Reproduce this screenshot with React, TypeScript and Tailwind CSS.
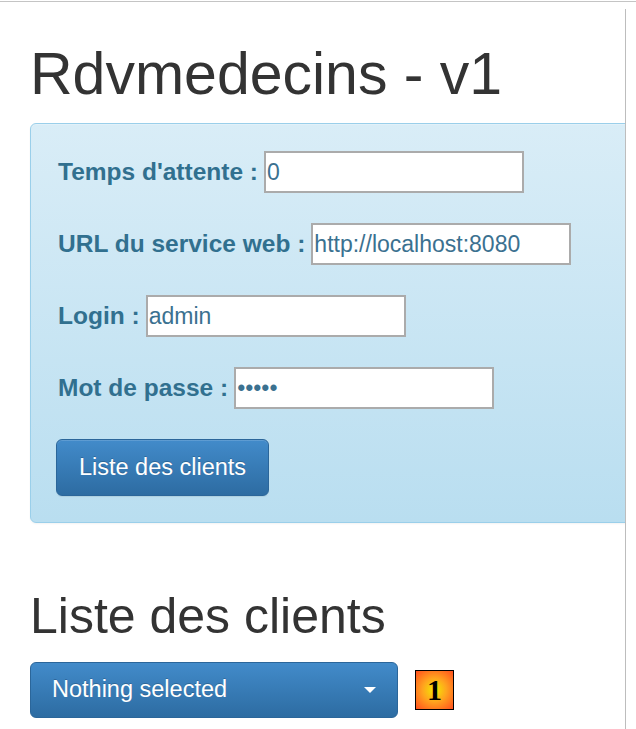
import React from 'react';

const fields = [
  { label: "Temps d'attente :", value: '0' },
  { label: 'URL du service web :', value: 'http://localhost:8080' },
  { label: 'Login :', value: 'admin' },
  { label: 'Mot de passe :', value: '•••••' },
];

const Field = ({ label, value }: { label: string; value: string }) => (
  <div className="flex items-center gap-[6px] h-[42px]">
    <label className="ml-[2px] text-[24.5px] font-bold text-[#31708f] leading-none">{label}</label>
    <input
      readOnly
      value={value}
      className="w-[260px] h-[42px] border-2 border-[#ababab] bg-white px-[1px] text-[23px] text-[#3b7190] outline-none"
    />
  </div>
);

const App = () => {
  return (
    <div className="w-[636px] h-[729px] bg-white overflow-hidden font-['Liberation_Sans',Arial,sans-serif]">
      <div className="h-px mt-px bg-[#c4c4c4]" />
      <div className="flex">
        <div className="w-[625px] overflow-hidden pl-[30px]">
          <h1 className="mt-[40px] text-[59px] leading-[65px] text-[#333333]">Rdvmedecins - v1</h1>

          {/* config panel */}
          <div className="mt-[16px] w-[620px] rounded-[6px] border border-[#9acfea] bg-gradient-to-b from-[#d9edf7] to-[#b9def0] pt-[27px] pb-[26px] pl-[25px] shadow-[inset_0_1px_0_rgba(255,255,255,0.25),0_1px_2px_rgba(0,0,0,0.05)]">
            <div className="flex flex-col gap-[30px]">
              {fields.map((f) => (
                <Field key={f.label} label={f.label} value={f.value} />
              ))}
              <div>
                <button className="h-[57px] w-[213px] rounded-[6px] border border-[#2b669a] bg-gradient-to-b from-[#428bca] to-[#2d6ca2] text-[23.5px] text-white [text-shadow:0_-1px_0_rgba(0,0,0,0.2)] shadow-[inset_0_1px_0_rgba(255,255,255,0.15),0_1px_1px_rgba(0,0,0,0.075)]">
                  Liste des clients
                </button>
              </div>
            </div>
          </div>

          <h2 className="mt-[66px] text-[50px] leading-[54px] text-[#333333]">Liste des clients</h2>

          <div className="mt-[19px] flex items-center gap-[17px]">
            <button className="flex h-[56px] w-[368px] items-center justify-between rounded-[6px] border border-[#2b669a] bg-gradient-to-b from-[#428bca] to-[#2d6ca2] pl-[21px] pr-[21px] text-[23.5px] text-white [text-shadow:0_-1px_0_rgba(0,0,0,0.2)]">
              <span>Nothing selected</span>
              <span className="h-0 w-0 border-l-[6px] border-r-[6px] border-t-[6px] border-l-transparent border-r-transparent border-t-white" />
            </button>
            <div className="flex h-[40px] w-[39px] items-center justify-center border border-black bg-[radial-gradient(circle,#f2ea00_0%,#ffa41e_45%,#ff4e1e_100%)] font-['Liberation_Serif',serif] text-[30px] font-bold leading-none text-black">
              1
            </div>
          </div>
        </div>
        <div className="mt-[7px] h-[720px] w-px bg-[#bdbdbd]" />
      </div>
    </div>
  );
};

export default App;
